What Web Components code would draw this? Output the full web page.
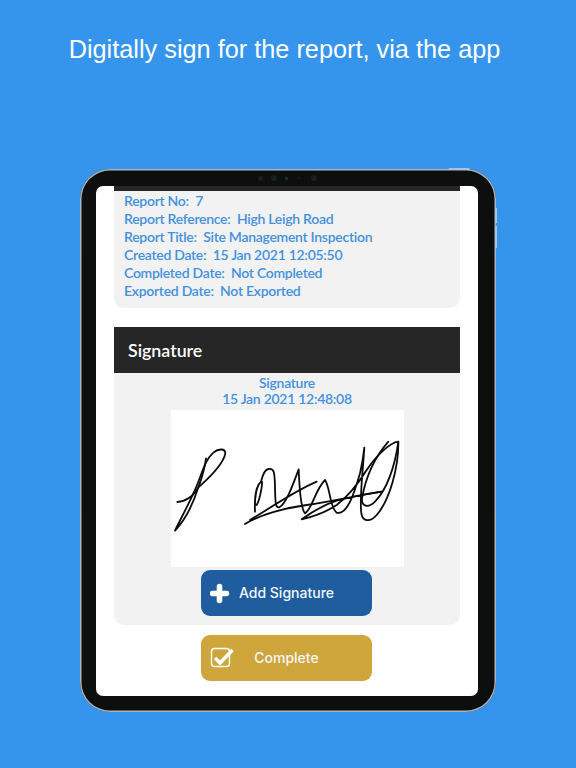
<!DOCTYPE html>
<html>
<head>
<meta charset="utf-8">
<style>
html, body { margin: 0; padding: 0; }
body { width: 576px; height: 768px; overflow: hidden; background: #3595ed; font-family: "Liberation Sans", Arial, sans-serif; }
</style>
</head>
<body>

<template id="tplStore">
<style>
:host { display: flex; flex-direction: column; align-items: center; width: 576px; height: 768px; box-sizing: border-box; background: #3595ed; }
h1 { flex: none; margin: 0 7px 0 0; padding-top: 34px; height: 169px; box-sizing: border-box; font: 400 25.3px/30px "Liberation Sans", Arial, sans-serif; color: #fff; }
</style>
<h1><slot name="title"></slot></h1>
<slot></slot>
</template>

<template id="tplTablet">
<style>
:host { display: block; flex: none; position: relative; width: 416px; height: 543px; box-sizing: border-box; padding: 17px 18px 16px 16px; background: #0d0e0e; border-radius: 30px; box-shadow: inset 0 0 0 1.5px #a9b4bd; }
.screen { height: 100%; background: #fff; border-radius: 7px; overflow: hidden; }
.cam { position: absolute; top: 6px; left: 178px; display: flex; align-items: center; }
.cam i { display: block; width: 5px; height: 5px; border-radius: 50%; background: #1c1d1d; }
.cam i:nth-child(2) { width: 6px; height: 6px; margin-left: 7.5px; }
.cam i:nth-child(3) { width: 3px; height: 3px; margin-left: 8.5px; background: #1c3a34; }
.cam i:nth-child(4) { width: 2px; height: 2px; margin-left: 9.5px; }
.cam i:nth-child(5) { width: 6px; height: 6px; margin-left: 11px; }
.side { position: absolute; right: -1px; width: 2px; background: #a7c3df; }
.s1 { top: 39px; height: 15px; }
.s2 { top: 57px; height: 22px; }
.top { position: absolute; top: -1px; right: 26px; width: 22px; height: 2px; background: #a7c3df; border-radius: 2px 2px 0 0; }
</style>
<div class="top"></div>
<div class="side s1"></div>
<div class="side s2"></div>
<div class="cam"><i></i><i></i><i></i><i></i><i></i></div>
<div class="screen"><slot></slot></div>
</template>

<template id="tplReport">
<style>
:host { display: flex; flex-direction: column; align-items: center; height: 100%; box-sizing: border-box; }
::slotted(*) { flex: none; }
</style>
<slot></slot>
</template>

<template id="tplPanel">
<style>
:host { display: block; width: 346px; background: #f2f2f3; border-radius: 0 0 10px 10px; box-sizing: border-box; }
</style>
<slot></slot>
</template>

<template id="tplRows">
<style>
:host { display: block; padding: 1px 10px 8px; font: 600 14px/18px Lato, "Liberation Sans", sans-serif; letter-spacing: -.28px; color: #4291dc; }
::slotted(div) { height: 18px; white-space: pre; }
</style>
<slot></slot>
</template>

<template id="tplHeader">
<style>
:host { display: flex; align-items: center; width: 346px; height: 46px; box-sizing: border-box; padding-left: 14px; background: #262626; color: #fff; font: 600 17.8px/20px Lato, "Liberation Sans", sans-serif; }
</style>
<slot></slot>
</template>

<template id="tplButton">
<style>
:host { display: flex; position: relative; align-items: center; justify-content: center; width: 171px; height: 46px; margin-right: 1px; border-radius: 9px; color: #f4f6f9; font: 500 14px/18px Inter, "Liberation Sans", sans-serif; background: var(--bg, #1f5d9e); }
.icon { position: absolute; left: 9px; top: 11px; width: 24px; height: 24px; }
</style>
<span class="icon"><slot name="icon"></slot></span>
<span><slot></slot></span>
</template>

<script>
function simple(tag, tplId) {
	customElements.define(tag, class extends HTMLElement {
		constructor() {
			super();
			this.attachShadow({mode: 'open'});
			this.shadowRoot.appendChild(document.getElementById(tplId).content.cloneNode(true));
		}
	});
}
simple('store-shot', 'tplStore');
simple('tablet-frame', 'tplTablet');
simple('report-view', 'tplReport');
simple('grey-panel', 'tplPanel');
simple('info-rows', 'tplRows');
simple('bar-header', 'tplHeader');
simple('app-button', 'tplButton');
</script>

<store-shot>
	<span slot="title">Digitally sign for the report, via the app</span>
	<tablet-frame>
		<report-view>
			<div style="width:346px;height:5px;background:#262626"></div>
			<grey-panel>
				<info-rows>
					<div>Report No:  7</div>
					<div>Report Reference:  High Leigh Road</div>
					<div>Report Title:  Site Management Inspection</div>
					<div>Created Date:  15 Jan 2021 12:05:50</div>
					<div>Completed Date:  Not Completed</div>
					<div>Exported Date:  Not Exported</div>
				</info-rows>
			</grey-panel>
			<bar-header style="margin-top:19px">Signature</bar-header>
			<grey-panel style="height:252px;display:flex;flex-direction:column;align-items:center;padding-top:2px">
				<div style="font:600 14px/16px Lato,'Liberation Sans',sans-serif;letter-spacing:-.28px;color:#4291dc;text-align:center">Signature<br>15 Jan 2021 12:48:08</div>
				<svg width="233" height="157" viewBox="33 30 699 471" style="display:block;margin-top:3px;background:#fff;flex:none" fill="none" stroke="#0b0b0b" stroke-width="5.4" stroke-linecap="round" stroke-linejoin="round">
					<path d="M45 392C75 360 100 310 115 262C140 240 190 195 196 160C196 145 175 145 160 158C130 185 125 230 100 280C85 315 60 360 45 392"/>
					<path d="M52 306C75 305 100 290 115 262C125 235 135 200 138 175"/>
					<path d="M285 335C283 290 290 255 303 245C312 235 300 300 290 315M303 245C308 225 315 208 325 207C342 204 344 215 345 260C346 300 345 325 358 322C380 310 400 250 416 208C418 250 420 325 435 340C455 330 465 270 495 240C510 260 510 325 530 338C560 345 580 290 600 220C606 195 610 170 613 143C608 220 598 300 604 340C608 365 630 368 650 345C690 300 716 200 715 125C690 128 650 165 620 210C595 250 570 285 530 315C500 335 460 350 425 358C450 340 490 315 530 302C580 288 620 282 665 275"/>
					<path d="M255 372C300 345 370 325 440 315C520 303 600 285 665 275"/>
					<path d="M270 360C330 325 400 275 470 245"/>
					<path d="M685 125C650 165 620 215 606 295C604 320 625 325 645 305C680 270 705 200 715 125"/>
				</svg>
				<app-button style="margin-top:3px;--bg:#1f5d9e">
					<svg slot="icon" width="24" height="24" viewBox="0 0 24 24"><path d="M9.5 5.5v14M2.5 12.5h14" stroke="#fff" stroke-width="5.6" stroke-linecap="round" fill="none"/></svg>
					Add Signature
				</app-button>
			</grey-panel>
			<app-button style="margin-top:10px;--bg:#cfa63c">
				<svg slot="icon" width="24" height="24" viewBox="0 0 24 24" fill="none"><rect x="1.5" y="2.5" width="18" height="18" rx="3" stroke="#fff" stroke-width="1.4"/><path d="M5 12l5 5L22.5 4" stroke="#fff" stroke-width="3.6"/></svg>
				Complete
			</app-button>
		</report-view>
	</tablet-frame>
</store-shot>

</body>
</html>
